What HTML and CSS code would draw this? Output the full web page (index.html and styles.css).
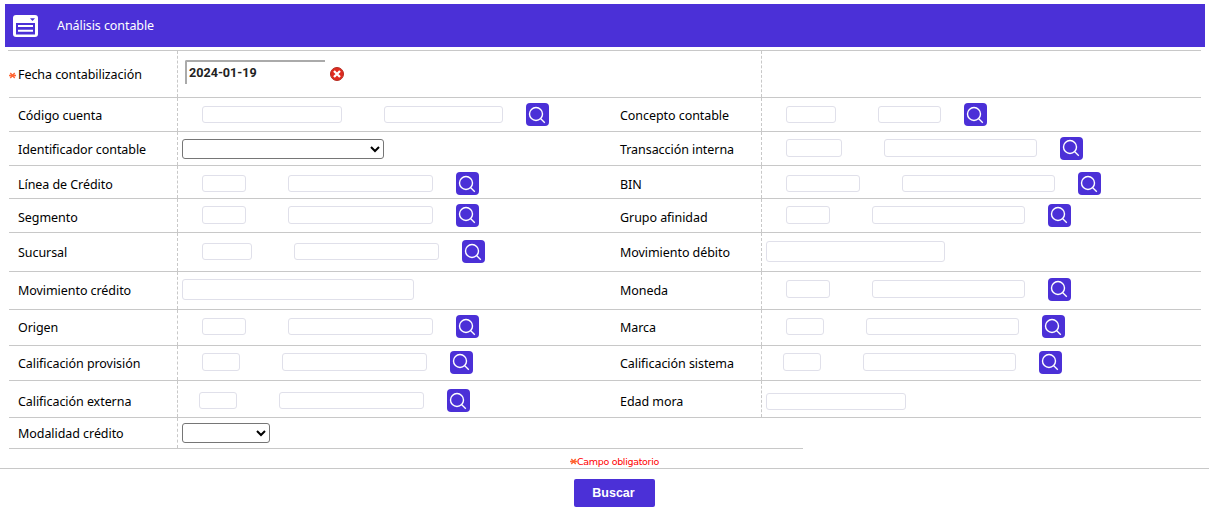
FILE: index.html
```html
<!DOCTYPE html>
<html lang="es">
<head>
<meta charset="utf-8">
<title>Análisis contable</title>
<link rel="stylesheet" href="styles.css">
</head>
<body>
<svg class="defs" aria-hidden="true">
  <symbol id="search" viewBox="0 0 23 23"><g fill="none" stroke="#fff"><circle cx="10" cy="11" r="6.5" stroke-width="1.4"/><path d="M14.5 15.5L18.8 19.8" stroke-width="1.3"/></g></symbol>
  <symbol id="star" viewBox="0 0 7 7"><path d="M0 3.5H7M1.3 1L5.7 6M5.7 1L1.3 6" stroke="#ff6633" stroke-width="1.4"/></symbol>
</svg>
<header class="bar">
  <svg class="bar-icon" viewBox="0 0 25 22"><rect width="25" height="22" rx="3" fill="#fff"/><path d="M17 3.3H22L19.5 6Z" fill="#4b30d7"/><path d="M3 8H22V19.5H3Z" fill="#4b30d7"/><path d="M5 11H20M5 15.8H20" stroke="#fff" stroke-width="2"/></svg>
  <h1>Análisis contable</h1>
</header>
<main class="form">
  <div class="row r1">
    <label class="label required"><svg class="star"><use href="#star"/></svg><span>Fecha contabilización</span></label>
    <div class="field date"><div class="date-input">2024-01-19</div>
      <svg class="clear" viewBox="0 0 14 14"><circle cx="7" cy="7" r="6.5" fill="#df2b20" stroke="#b42c20"/><path d="M4 4L10 10M10 4L4 10" stroke="#fff" stroke-width="2.3"/></svg></div>
    <label class="label second"></label><div class="field"></div>
  </div>
  <div class="row r2">
    <label class="label">Código cuenta</label>
    <div class="field lookup"><i class="box w140"></i><i class="box w119"></i><svg class="search"><use href="#search"/></svg></div>
    <label class="label second">Concepto contable</label>
    <div class="field lookup"><i class="box w50"></i><i class="box w63"></i><svg class="search"><use href="#search"/></svg></div>
  </div>
  <div class="row r3 tall">
    <label class="label">Identificador contable</label>
    <div class="field"><div class="select w202"><svg viewBox="0 0 10 7"><path d="M1 1L5 5L9 1"/></svg></div></div>
    <label class="label second">Transacción interna</label>
    <div class="field lookup"><i class="box w56"></i><i class="box w153"></i><svg class="search"><use href="#search"/></svg></div>
  </div>
  <div class="row r4">
    <label class="label">Línea de Crédito</label>
    <div class="field lookup"><i class="box w44"></i><i class="box w145"></i><svg class="search"><use href="#search"/></svg></div>
    <label class="label second">BIN</label>
    <div class="field lookup"><i class="box w74"></i><i class="box w153"></i><svg class="search"><use href="#search"/></svg></div>
  </div>
  <div class="row r5 tall">
    <label class="label">Segmento</label>
    <div class="field lookup"><i class="box w44"></i><i class="box w145"></i><svg class="search"><use href="#search"/></svg></div>
    <label class="label second">Grupo afinidad</label>
    <div class="field lookup"><i class="box w44"></i><i class="box w153"></i><svg class="search"><use href="#search"/></svg></div>
  </div>
  <div class="row r6">
    <label class="label">Sucursal</label>
    <div class="field lookup"><i class="box w50"></i><i class="box w145"></i><svg class="search"><use href="#search"/></svg></div>
    <label class="label second">Movimiento débito</label>
    <div class="field"><i class="box large w179"></i></div>
  </div>
  <div class="row r7 tall">
    <label class="label">Movimiento crédito</label>
    <div class="field"><i class="box large w232"></i></div>
    <label class="label second">Moneda</label>
    <div class="field lookup"><i class="box w44"></i><i class="box w153"></i><svg class="search"><use href="#search"/></svg></div>
  </div>
  <div class="row r8">
    <label class="label">Origen</label>
    <div class="field lookup"><i class="box w44"></i><i class="box w145"></i><svg class="search"><use href="#search"/></svg></div>
    <label class="label second">Marca</label>
    <div class="field lookup"><i class="box w38"></i><i class="box w153"></i><svg class="search"><use href="#search"/></svg></div>
  </div>
  <div class="row r9 tall">
    <label class="label">Calificación provisión</label>
    <div class="field lookup"><i class="box w38"></i><i class="box w145"></i><svg class="search"><use href="#search"/></svg></div>
    <label class="label second">Calificación sistema</label>
    <div class="field lookup near"><i class="box w38"></i><i class="box w153"></i><svg class="search"><use href="#search"/></svg></div>
  </div>
  <div class="row r10">
    <label class="label">Calificación externa</label>
    <div class="field lookup near"><i class="box w38"></i><i class="box w145"></i><svg class="search"><use href="#search"/></svg></div>
    <label class="label second">Edad mora</label>
    <div class="field"><i class="box w140"></i></div>
  </div>
  <div class="row r11">
    <label class="label">Modalidad crédito</label>
    <div class="field"><div class="select w88"><svg viewBox="0 0 10 7"><path d="M1 1L5 5L9 1"/></svg></div></div>
  </div>
</main>
<div class="note"><svg class="star"><use href="#star"/></svg><span>Campo obligatorio</span></div>
<footer><button>Buscar</button></footer>
</body>
</html>
```
FILE: styles.css
```css
* { box-sizing: border-box; }
body { margin: 0; background: #fff; color: #000; font: 13px/18px "Noto Sans", sans-serif; overflow: hidden; }
.defs { position: absolute; width: 0; height: 0; }
.bar { display: flex; align-items: center; width: 1200px; height: 43px; margin: 4px 0 3px 5px; padding-left: 8px; background: #4b30d7; color: #fff; }
.bar-icon { width: 25px; height: 22px; margin-right: 19px; }
.bar h1 { margin: 0; font-size: 12.5px; font-weight: 400; letter-spacing: -0.08px; }
.form { width: 1193px; margin-left: 8px; padding-left: 1px; border-top: 1px solid #c8c8c8; }
.row { display: grid; grid-template-columns: 169px 433px 151px 439px; height: var(--h); border-bottom: 1px solid #c8c8c8; --box: 17px; --icon-y: 0px; }
.tall { --box: 18px; --icon-y: -1px; }
.label { border-right: 1px dashed #c8c8c8; padding: var(--text) 0 0 9px; white-space: nowrap; font-size: 12.5px; letter-spacing: -0.06px; }
.required { display: flex; align-items: flex-start; padding-left: 0; }
.required .star { margin: 6px 2px 0 0; }
.star { width: 7px; height: 7px; flex: none; }
.field { display: flex; align-items: flex-start; padding: var(--plain) 0 0 4px; }
.lookup { padding: var(--top) 0 0 24px; }
.near { padding-left: 21px; }
.box { display: block; height: var(--box); border: 1px solid #e0e0ea; border-radius: 3px; background: #fff; }
.lookup .box + .box { margin-left: 42px; }
.large { height: 21px; }
.search { width: 23px; height: 23px; margin: var(--lift) 0 0 23px; padding: 0; border-radius: 4px; background: #4b30d7; }
.search use { transform: translateY(var(--icon-y)); }
.r1 { --h: 47px; --text: 15px; --plain: 9px; }
.r2 { --h: 34px; --text: 9px; --top: 8px; --lift: -3px; }
.r3 { --h: 34px; --text: 9px; --plain: 7px; --top: 7px; --lift: -2px; }
.r4 { --h: 33px; --text: 10px; --top: 9px; --lift: -3px; }
.r5 { --h: 34px; --text: 10px; --top: 7px; --lift: -2px; }
.r6 { --h: 39px; --text: 11px; --top: 10px; --plain: 8px; --lift: -3px; }
.r7 { --h: 38px; --text: 10px; --top: 8px; --plain: 7px; --lift: -2px; }
.r8 { --h: 36px; --text: 9px; --top: 8px; --lift: -3px; }
.r9 { --h: 35px; --text: 9px; --top: 7px; --lift: -2px; }
.r10 { --h: 37px; --text: 12px; --top: 11px; --plain: 12px; --lift: -3px; }
.r11 { --h: 31px; --text: 7px; --plain: 5px; width: 794px; grid-template-columns: 169px 1fr; }
.date { padding-left: 7px; }
.date-input { width: 140px; height: 24px; padding: 2px; border-top: 2px solid #aaa; border-left: 2px solid #aaa; border-radius: 2px 0 0 0; color: #222; font: 700 12.6px/17px Roboto, sans-serif; }
.clear { width: 14px; height: 14px; margin: 7px 0 0 5px; }
.select { display: flex; justify-content: flex-end; align-items: center; height: 20px; padding-right: 3px; border: 1px solid #767676; border-radius: 3px; }
.select svg { width: 10px; height: 7px; fill: none; stroke: #000; stroke-width: 2; }
.w38 { width: 38px; } .w44 { width: 44px; } .w50 { width: 50px; } .w56 { width: 56px; }
.w63 { width: 63px; } .w74 { width: 74px; } .w88 { width: 88px; } .w119 { width: 119px; }
.w140 { width: 140px; } .w145 { width: 145px; } .w153 { width: 153px; } .w179 { width: 179px; }
.w202 { width: 202px; } .w232 { width: 232px; }
.note { display: flex; align-items: center; height: 20px; padding: 6px 0 0 570px; border-bottom: 1px solid #c8c8c8; color: #f00; font: 9.5px/12px "DejaVu Sans", sans-serif; letter-spacing: -0.32px; white-space: nowrap; }
footer { padding: 10px 0 0 574px; }
button { display: block; width: 81px; height: 28px; padding: 0 2px 0 0; border: 0; border-radius: 2px; background: #4b30d7; color: #fff; font: 700 12.5px/28px "Liberation Sans", sans-serif; }
```
